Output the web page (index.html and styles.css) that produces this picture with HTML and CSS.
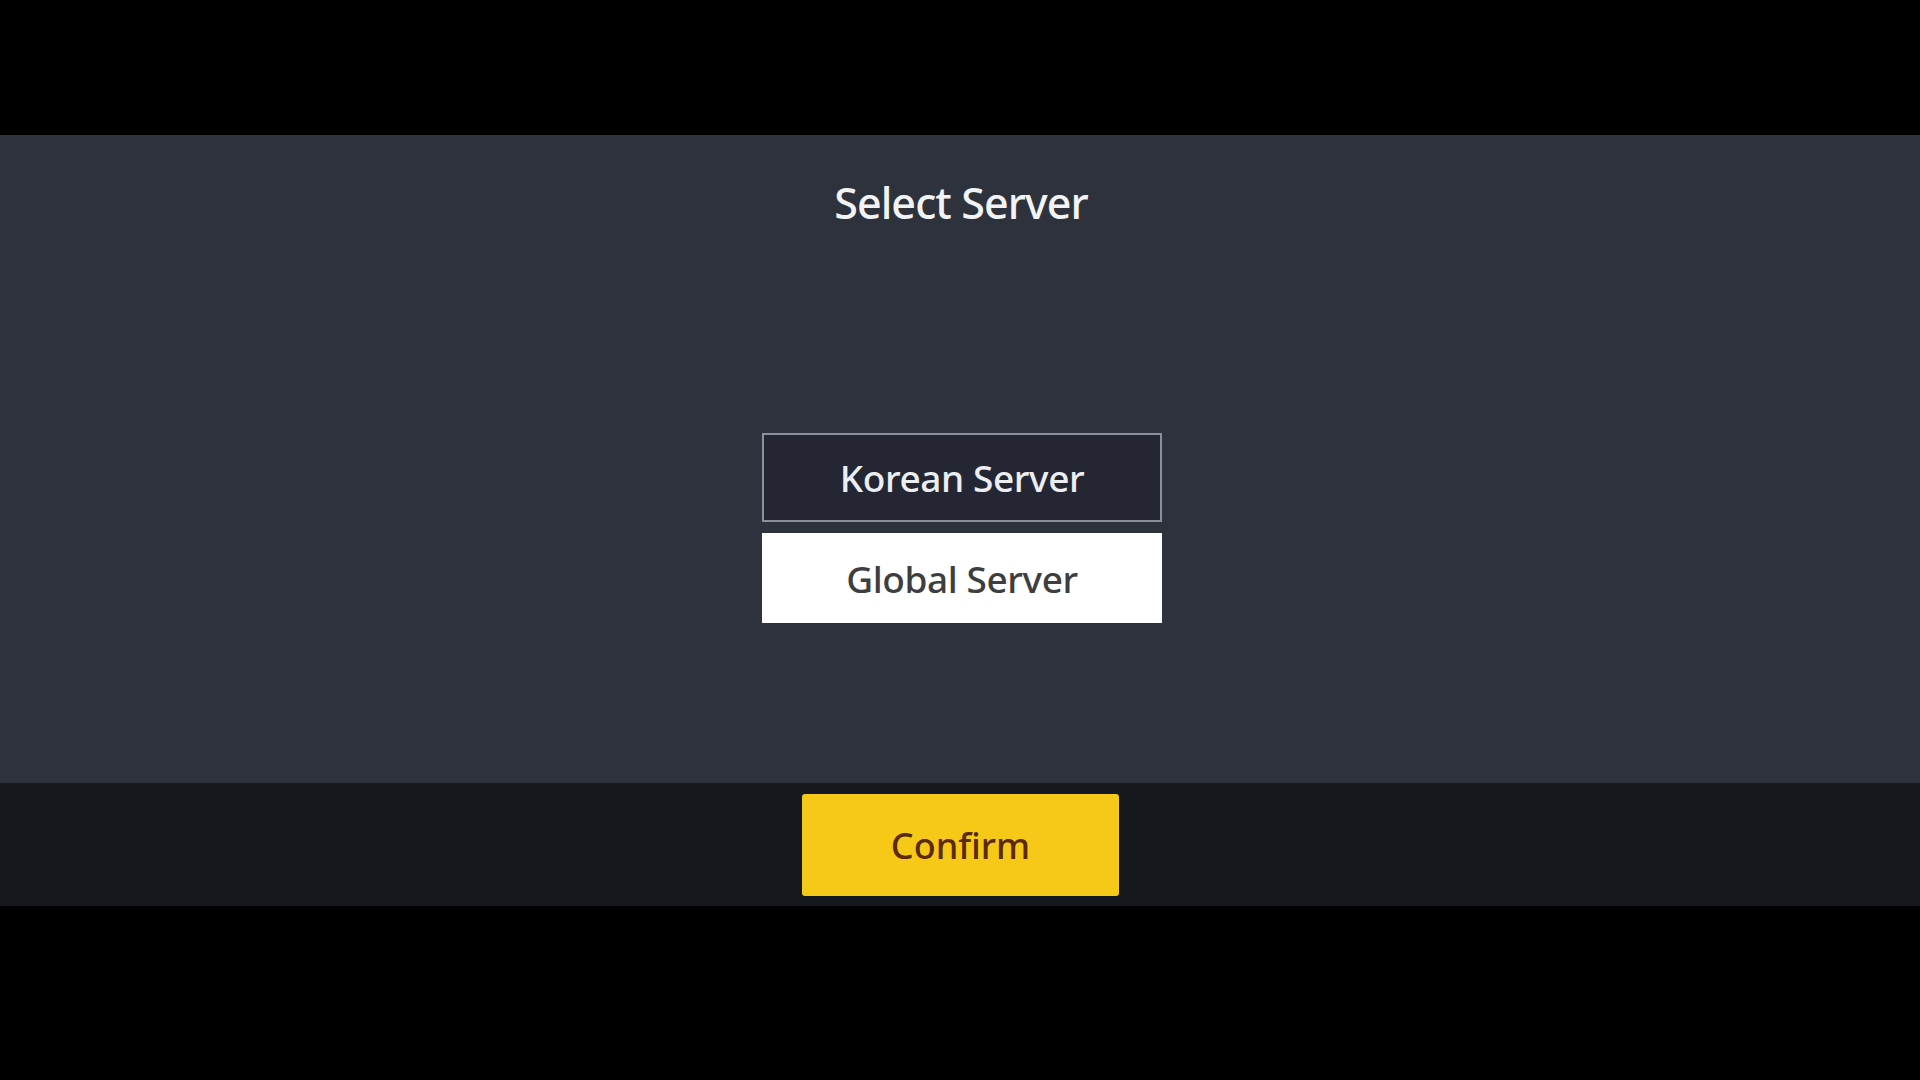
FILE: index.html
```html
<!DOCTYPE html>
<html>
<head>
<meta charset="utf-8">
<link rel="stylesheet" href="styles.css">
</head>
<body>
<div class="screen">
  <div class="topbar"></div>
  <main class="panel">
    <h1 class="title">Select Server</h1>
    <div class="options">
      <div class="option option-dark">Korean Server</div>
      <div class="option option-light">Global Server</div>
    </div>
  </main>
  <footer class="footer">
    <button class="confirm">Confirm</button>
  </footer>
</div>
</body>
</html>
```
FILE: styles.css
```css
html, body {
  margin: 0;
  padding: 0;
  background: #000;
}
.screen {
  width: 1920px;
  height: 1080px;
  display: flex;
  flex-direction: column;
  font-family: "Noto Sans", "Open Sans", sans-serif;
}
.topbar {
  height: 135px;
  background: #000;
}
.panel {
  height: 648px;
  background: #2e323c;
  display: flex;
  flex-direction: column;
  align-items: center;
}
.title {
  margin: 0;
  padding-top: 38px;
  font-size: 43px;
  font-weight: 500;
  letter-spacing: -0.9px;
  color: #f2f3f5;
  line-height: 60px;
  padding-left: 2px;
}
.options {
  margin-top: 200px;
  display: flex;
  flex-direction: column;
  gap: 11px;
  padding-left: 4px;
}
.option {
  width: 400px;
  height: 89px;
  box-sizing: border-box;
  display: flex;
  align-items: center;
  justify-content: center;
  font-size: 37px;
  font-weight: 500;
  letter-spacing: -0.4px;
}
.option-dark {
  background: #242733;
  border: 2px solid #8b909b;
  color: #eceef1;
}
.option-light {
  background: #ffffff;
  height: 90px;
  color: #3e3e40;
}
.footer {
  height: 123px;
  background: #15181d;
  display: flex;
  justify-content: center;
  align-items: flex-start;
}
.confirm {
  margin-top: 11px;
  width: 317px;
  height: 102px;
  border: none;
  border-radius: 3px;
  background: #f6c918;
  color: #5a2a0a;
  font-family: "Noto Sans", "Open Sans", sans-serif;
  font-size: 36px;
  font-weight: 500;
  padding: 0;
  margin-left: 1px;
}
```
